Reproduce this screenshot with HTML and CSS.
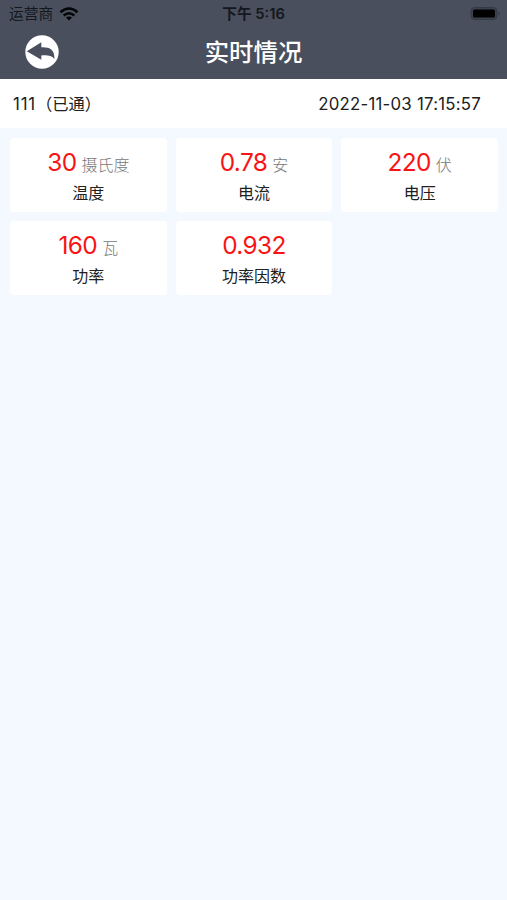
FILE: index.html
```html
<!DOCTYPE html>
<html lang="zh-CN">
<head>
<meta charset="UTF-8">
<title>实时情况</title>
<link rel="stylesheet" href="styles.css">
</head>
<body>
<header class="header">
  <div class="status">
    <div class="carrier"><span>运营商</span>
      <svg class="wifi" width="20" height="14" viewBox="0 0 20 14" fill="none" stroke="#030406" stroke-width="2.5"><path d="M1.5 5.2Q10-2.1 18.5 5.2M4.7 8.5Q10 4 15.3 8.5"/><path d="M7 10.5Q10 8.3 13 10.5L10 13.6Z" fill="#030406" stroke="none"/></svg>
    </div>
    <div class="clock">下午 5:16</div>
    <svg class="battery" width="32" height="16" viewBox="0 0 32 16"><rect x="1" y="1.5" width="26" height="12" rx="3.5" fill="#3c424d" stroke="#343a44"/><rect x="3" y="3.5" width="22" height="8" rx="1.5" fill="#000"/><path d="M28.5 5.5q2.3 2 0 4z" fill="#303640"/></svg>
  </div>
  <nav class="nav">
    <a class="back" href="#" aria-label="返回"><svg width="34" height="34" viewBox="0 0 34 34"><circle cx="17" cy="17" r="16.7" fill="#fff"/><path d="M1.8 16.3L16.3 7.3V12.3C25 12 29.5 14.5 29.5 24C26 20.3 22.5 20.1 16.3 20.5V24.7Z" fill="#494f5c"/></svg></a>
    <h1 class="title">实时情况</h1>
  </nav>
</header>
<section class="device"><div><span class="number">111</span><span class="state">（已通）</span></div><time class="time">2022-11-03 17:15:57</time></section>
<main class="grid">
  <div class="card"><div class="reading"><span class="value">30</span><span class="unit">摄氏度</span></div><div class="label">温度</div></div>
  <div class="card"><div class="reading"><span class="value">0.78</span><span class="unit">安</span></div><div class="label">电流</div></div>
  <div class="card"><div class="reading"><span class="value">220</span><span class="unit">伏</span></div><div class="label">电压</div></div>
  <div class="card"><div class="reading"><span class="value">160</span><span class="unit">瓦</span></div><div class="label">功率</div></div>
  <div class="card"><div class="reading"><span class="value">0.932</span></div><div class="label">功率因数</div></div>
</main>
</body>
</html>
```
FILE: styles.css
```css
* { box-sizing: border-box; }
body { margin: 0; min-height: 100vh; background: #f3f9ff; color: #202020; font-family: Inter, "Noto Sans CJK SC", sans-serif; }
.header { height: 79px; background: #494f5c; }
.status { height: 27px; padding: 0 5px; display: grid; grid-template-columns: 1fr auto 1fr; align-items: center; font-size: 14.7px; line-height: 28px; color: #14171d; }
.carrier { padding-left: 4px; display: flex; align-items: center; gap: 6px; }
.clock { font-weight: 600; }
.battery { justify-self: end; }
.nav { height: 50px; padding: 0 25px; display: grid; grid-template-columns: 34px 1fr 34px; align-items: center; }
.back { display: block; height: 34px; }
.title { margin: 0; text-align: center; font-size: 24.4px; font-weight: 500; line-height: 50px; color: #fff; }
.device { height: 49px; padding: 1px 26px 0 13px; display: flex; justify-content: space-between; align-items: center; background: #fff; font-size: 16.3px; line-height: 48px; }
.number { font-size: 16.8px; letter-spacing: 0.8px; }
.time { font-size: 16.8px; letter-spacing: 0.24px; }
.grid { padding: 10px 9px 0 10px; display: grid; grid-template-columns: repeat(3, 1fr); grid-auto-rows: 74px; gap: 9px; }
.card { padding-top: 8px; background: #fff; border-radius: 4px; text-align: center; }
.reading { height: 32px; display: flex; justify-content: center; align-items: baseline; gap: 5px; line-height: 32px; }
.value { font-size: 24.4px; letter-spacing: -0.6px; color: #f81414; }
.unit { font-size: 16px; font-weight: 300; color: #777; }
.label { font-size: 16px; line-height: 30px; }
```
